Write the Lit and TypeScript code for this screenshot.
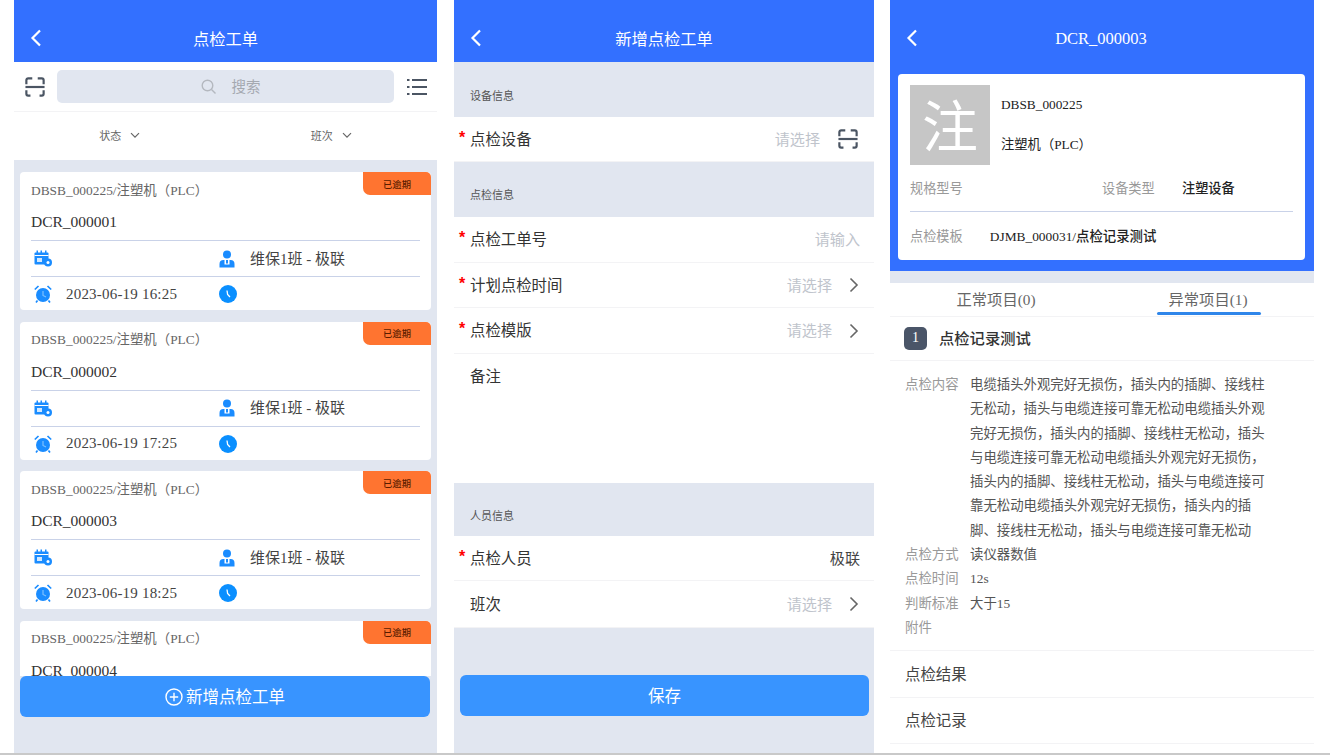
import { LitElement, html, css, svg } from 'lit'
import { customElement } from 'lit/decorators.js'

const back = html`<svg class="back" width="12" height="18" viewBox="0 0 12 18"><path d="M10 1.500 2.500 9l7.500 7.500" fill="none" stroke="#fff" stroke-width="2.200"/></svg>`

const scan = html`<svg width="20" height="20" viewBox="0 0 22 22" fill="none" stroke="#4b5563" stroke-width="2.400"><path d="M1.500 8V3.500a2 2 0 0 1 2-2H8M14 1.500h4.500a2 2 0 0 1 2 2V8M1.500 14.500v4a2 2 0 0 0 2 2H6M16 20.500h2.500a2 2 0 0 0 2-2v-4"/><path d="M0.500 11h21"/></svg>`

const chevronRight = html`<svg class="go" width="10" height="16" viewBox="0 0 10 16"><path d="M1.500 1.500 8 8l-6.500 6.500" fill="none" stroke="#666" stroke-width="1.600"/></svg>`

const chevronDown = html`<svg width="10" height="7" viewBox="0 0 10 7"><path d="M1 1.200 5 5.200l4-4" fill="none" stroke="#666" stroke-width="1.200"/></svg>`

const calendar = html`<svg width="18" height="17" viewBox="0 0 18 17"><g fill="#1a8cff"><rect x="0.500" y="2.500" width="14" height="12" rx="1"/><rect x="2.500" y="0.500" width="1.500" height="3.500"/><rect x="6.500" y="0.500" width="1.500" height="3.500"/><rect x="11" y="0.500" width="1.500" height="3.500"/><circle cx="14" cy="12.500" r="4"/></g><rect x="0.500" y="5" width="14" height="1" fill="#fff"/><rect x="3" y="8" width="5" height="4" fill="#fff" opacity=".8"/><circle cx="14" cy="12.500" r="1.500" fill="#fff"/></svg>`

const user = html`<svg width="16" height="18" viewBox="0 0 16 18" fill="#1a8cff"><circle cx="8" cy="4.500" r="4"/><path d="M0.500 17.500v-3.500a4 4 0 0 1 4-4h1v4.500h5V10h1a4 4 0 0 1 4 4v3.500z"/><rect x="7" y="10" width="2" height="3.500"/></svg>`

const alarm = html`<svg width="18" height="18" viewBox="0 0 18 18"><circle cx="9" cy="10" r="7" fill="#1a8cff"/><path d="M9 6v4.500l3 1.500" fill="none" stroke="#7cc0ff" stroke-width="1.200"/><path d="M0.800 4.500 4.500 1M17.200 4.500 13.500 1M3.500 15.500 2 17.500M14.500 15.500l1.500 2" stroke="#1a8cff" stroke-width="1.700" fill="none"/></svg>`

const clock = html`<svg width="18" height="18" viewBox="0 0 18 18"><circle cx="9" cy="9" r="9" fill="#0a8fff"/><path d="M8 5.500 8.600 9.500l2.400 2.500" fill="none" stroke="#fff" stroke-width="1.300"/></svg>`

const magnifier = svg`<circle cx="6.500" cy="6.500" r="5.300" fill="none" stroke="#b4b8bf" stroke-width="1.400"/><path d="m10.500 10.500 4 4" stroke="#b4b8bf" stroke-width="1.400"/>`

const menuLines = svg`<g fill="#4b5563"><rect x="0" y="1" width="2.500" height="2"/><rect x="5" y="1" width="15" height="2"/><rect x="0" y="8" width="2.500" height="2"/><rect x="5" y="8" width="15" height="2"/><rect x="0" y="15" width="2.500" height="2"/><rect x="5" y="15" width="15" height="2"/></g>`

const orders = [
  { no: 'DCR_000001', time: '2023-06-19 16:25' },
  { no: 'DCR_000002', time: '2023-06-19 17:25' },
  { no: 'DCR_000003', time: '2023-06-19 18:25' },
  { no: 'DCR_000004', time: '2023-06-19 19:25' },
]

@customElement('app-root')
export class AppRoot extends LitElement {
  static styles = css`
    :host {
      display: block;
      height: 755px;
      overflow: hidden;
      background: #fff;
      font-family: 'Liberation Serif', 'Noto Sans CJK SC', serif;
      color: #333;
      position: relative;
    }
    .page {
      display: flex;
      height: 753px;
      padding-left: 14px;
      border-bottom: 2px solid #c9c9c9;
    }
    .panel {
      display: flex;
      flex-direction: column;
      background: #e1e6f0;
      overflow: hidden;
    }
    .p1 { width: 423px; margin-right: 17px; }
    .p2 { width: 420px; margin-right: 16px; }
    .p3 { width: 424px; background: #fff; }

    .nav {
      flex: none;
      height: 62px;
      background: #3370ff;
      color: #fff;
      display: flex;
      align-items: center;
      justify-content: center;
      font-size: 16.300px;
      padding-top: 14px;
      box-sizing: border-box;
      position: relative;
    }
    .back { position: absolute; left: 16px; top: 29px; }

    .tools {
      flex: none;
      height: 50px;
      background: #fff;
      border-bottom: 1px solid #f3f3f5;
      box-sizing: border-box;
      display: flex;
      align-items: center;
      padding: 0 10px 0 11px;
    }
    .search {
      width: 337px;
      height: 33px;
      margin: 0 13px 0 12px;
      padding: 0 0 3px 10px;
      box-sizing: border-box;
      background: #e1e6f0;
      border-radius: 5px;
      display: flex;
      align-items: center;
      justify-content: center;
      gap: 15px;
      color: #a5a9b0;
      font-size: 14.500px;
    }
    .search svg { margin-top: 3px; }
    .filters {
      flex: none;
      height: 48px;
      background: #fff;
      display: grid;
      grid-template-columns: 1fr 1fr;
      font-size: 11px;
      color: #666;
    }
    .filters div {
      display: flex;
      align-items: center;
      justify-content: center;
      gap: 9px;
      padding-bottom: 2px;
    }

    .list {
      flex: none;
      height: 516px;
      overflow: hidden;
      padding: 12px 6px 0;
      box-sizing: border-box;
      display: flex;
      flex-direction: column;
      gap: 11.500px;
    }
    .card {
      flex: none;
      height: 138px;
      background: #fff;
      border-radius: 4px;
      padding: 0 11px;
      position: relative;
      box-sizing: border-box;
    }
    .badge {
      position: absolute;
      top: 0;
      right: 0;
      width: 68px;
      height: 23px;
      background: #ff7430;
      border-radius: 0 5px 0 7px;
      font-size: 9.300px;
      font-weight: 500;
      color: #5a1d00;
      display: flex;
      align-items: center;
      justify-content: center;
    }
    .equip {
      height: 33px;
      display: flex;
      align-items: center;
      font-size: 13.400px;
      color: #666;
    }
    .no {
      height: 36px;
      padding-bottom: 1px;
      box-sizing: border-box;
      display: flex;
      align-items: center;
      font-size: 15.500px;
      border-bottom: 1px solid #c9d2e8;
    }
    .info {
      height: 35px;
      display: grid;
      grid-template-columns: 185px 1fr;
      align-items: center;
      font-size: 15px;
      color: #444;
    }
    .info + .info { border-top: 1px solid #c9d2e8; height: 34px; }
    .cell { display: flex; align-items: center; }
    .cell svg { flex: none; margin-left: 3px; }
    .team { margin-left: 15px; margin-top: -3px; }
    .date { margin-left: 14px; letter-spacing: 0.200px; }

    .fab {
      flex: none;
      height: 41px;
      padding-bottom: 2px;
      box-sizing: border-box;
      background: #3894ff;
      border-radius: 6px;
      color: #fff;
      font-size: 16.500px;
      display: flex;
      align-items: center;
      justify-content: center;
      gap: 3px;
    }
    .fab svg { margin-top: 2px; }
    .p1 .fab { margin: 0 7px 0 6px; }
    .p2 .fab { margin: 0 5px 0 6px; }

    .sect {
      flex: none;
      height: 55px;
      padding: 24px 0 0 16px;
      box-sizing: border-box;
      font-size: 11px;
      color: #555;
      line-height: 18px;
    }
    .sect.first { padding-top: 25px; }
    .sect.short { height: 53px; }
    .row {
      flex: none;
      height: 46px;
      background: #fff;
      border-bottom: 1px solid #f3f3f5;
      box-sizing: border-box;
      display: flex;
      align-items: center;
      padding: 0 14px 3px 16px;
      font-size: 15.400px;
      position: relative;
    }
    .row.low { height: 45px; }
    .row.tall { height: 47px; }
    .req::before {
      content: '*';
      position: absolute;
      left: 5px;
      top: 12px;
      color: #f00;
      font-size: 16px;
      font-weight: 700;
      font-family: 'Liberation Sans', sans-serif;
    }
    .val { margin-left: auto; color: #c0c4cc; font-size: 15.100px; }
    .val.set { color: #444; }
    .go { margin: 3px 1px 0 17px; }
    .row .scan { margin: 3px 2px 0 18px; display: flex; }
    .note { height: 129px; align-items: flex-start; padding-top: 10px; border: 0; }
    .foot { flex: none; height: 37px; }
    .gap47 { flex: none; height: 47px; }

    .hero {
      flex: none;
      background: #3370ff;
      height: 271px;
      padding: 0 9px 0 8px;
      box-sizing: border-box;
    }
    .hero .nav {
      height: 74px;
      padding: 4px 2px 0 0;
      margin: 0 -9px 0 -8px;
      background: none;
      font-size: 16.500px;
    }
    .sheet {
      height: 186px;
      background: #fff;
      border-radius: 4px;
      padding: 11px 12px 0;
      box-sizing: border-box;
    }
    .top { display: flex; height: 80px; }
    .thumb {
      width: 80px;
      height: 80px;
      overflow: hidden;
      background: #c6c6c6;
      color: #fff;
      font-size: 56px;
      line-height: 86px;
      text-align: center;
      flex: none;
    }
    .names {
      margin-left: 11px;
      padding-top: 10px;
      font-size: 13.300px;
      color: #222;
      line-height: 20px;
      display: flex;
      flex-direction: column;
      gap: 20px;
    }
    .spec {
      height: 47px;
      padding-bottom: 2px;
      display: grid;
      grid-template-columns: 192px 80px 1fr;
      align-items: center;
      font-size: 13.200px;
      color: #999;
      border-bottom: 1px solid #c9d2e8;
      box-sizing: border-box;
    }
    .strong { color: #222; font-weight: 500; }
    .tmpl {
      height: 48px;
      padding-bottom: 2px;
      box-sizing: border-box;
      display: flex;
      align-items: center;
      font-size: 13.200px;
      color: #999;
    }
    .tmpl b { margin-left: 27px; color: #222; font-weight: 500; font-size: 13.400px; }
    .strip { flex: none; height: 12px; background: #e1e6f0; }
    .tabs {
      flex: none;
      height: 34px;
      display: grid;
      grid-template-columns: 1fr 1fr;
      border-bottom: 1px solid #f3f3f5;
      box-sizing: border-box;
      font-size: 15.300px;
      color: #666;
      text-align: center;
      line-height: 33px;
    }
    .tab { position: relative; }
    .tab.on::after {
      content: '';
      position: absolute;
      left: 55px;
      bottom: 1px;
      width: 104px;
      height: 3px;
      border-radius: 2px;
      background: #2f86ea;
    }
    .head {
      flex: none;
      height: 44px;
      display: flex;
      align-items: center;
      padding: 0 0 1px 14px;
      gap: 12px;
      font-size: 15.300px;
      border-bottom: 1px solid #f3f3f5;
      box-sizing: border-box;
      font-weight: 500;
      color: #333;
    }
    .head-title { margin-top: -2px; }
    .num {
      width: 23px;
      height: 23px;
      background: #4a5568;
      color: #fff;
      border-radius: 5px;
      font-size: 14px;
      font-weight: 400;
      display: flex;
      align-items: center;
      justify-content: center;
    }
    .detail {
      flex: none;
      padding: 12px 0 0 15px;
      height: 290px;
      box-sizing: border-box;
      border-bottom: 1px solid #f3f3f5;
      font-size: 13.400px;
      line-height: 24.300px;
      color: #555;
    }
    .d {
      display: grid;
      grid-template-columns: 65px 298px;
    }
    .d span:first-child { color: #999; }
    .line {
      flex: none;
      height: 46.500px;
      padding: 0 0 2px 15px;
      border-bottom: 1px solid #f3f3f5;
      box-sizing: border-box;
      display: flex;
      align-items: center;
      font-size: 15.400px;
      color: #444;
    }
  `

  renderCard(o: { no: string; time: string }) {
    return html`
      <div class="card">
        <div class="badge">已逾期</div>
        <div class="equip">DBSB_000225/注塑机（PLC）</div>
        <div class="no">${o.no}</div>
        <div class="info">
          <div class="cell">${calendar}</div>
          <div class="cell">${user}<span class="team">维保1班 - 极联</span></div>
        </div>
        <div class="info">
          <div class="cell">${alarm}<span class="date">${o.time}</span></div>
          <div class="cell">${clock}</div>
        </div>
      </div>
    `
  }

  renderList() {
    return html`
      <section class="panel p1">
        <div class="nav">${back}点检工单</div>
        <div class="tools">
          ${scan}
          <div class="search">
            <svg width="16" height="16" viewBox="0 0 16 16">${magnifier}</svg>
            <span>搜索</span>
          </div>
          <svg width="20" height="18" viewBox="0 0 20 18">${menuLines}</svg>
        </div>
        <div class="filters">
          <div>状态 ${chevronDown}</div>
          <div>班次 ${chevronDown}</div>
        </div>
        <div class="list">${orders.map((o) => this.renderCard(o))}</div>
        <div class="fab">
          <svg width="18" height="18" viewBox="0 0 18 18" fill="none" stroke="#fff" stroke-width="1.400"><circle cx="9" cy="9" r="8"/><path d="M9 4.800v8.400M4.800 9h8.400"/></svg>
          新增点检工单
        </div>
      </section>
    `
  }

  renderForm() {
    return html`
      <section class="panel p2">
        <div class="nav">${back}新增点检工单</div>
        <div class="sect first">设备信息</div>
        <div class="row low req">点检设备<span class="val">请选择</span><span class="scan">${scan}</span></div>
        <div class="sect">点检信息</div>
        <div class="row req">点检工单号<span class="val">请输入</span></div>
        <div class="row low req">计划点检时间<span class="val">请选择</span>${chevronRight}</div>
        <div class="row req">点检模版<span class="val">请选择</span>${chevronRight}</div>
        <div class="row note">备注</div>
        <div class="sect short">人员信息</div>
        <div class="row low req">点检人员<span class="val set">极联</span></div>
        <div class="row tall">班次<span class="val">请选择</span>${chevronRight}</div>
        <div class="gap47"></div>
        <div class="fab">保存</div>
        <div class="foot"></div>
      </section>
    `
  }

  renderDetail() {
    return html`
      <section class="panel p3">
        <div class="hero">
          <div class="nav">${back}DCR_000003</div>
          <div class="sheet">
            <div class="top">
              <div class="thumb">注</div>
              <div class="names">
                <span>DBSB_000225</span>
                <span>注塑机（PLC）</span>
              </div>
            </div>
            <div class="spec">
              <span>规格型号</span><span>设备类型</span><span class="strong">注塑设备</span>
            </div>
            <div class="tmpl">点检模板<b>DJMB_000031/点检记录测试</b></div>
          </div>
        </div>
        <div class="strip"></div>
        <div class="tabs">
          <div class="tab">正常项目(0)</div>
          <div class="tab on">异常项目(1)</div>
        </div>
        <div class="head"><span class="num">1</span><span class="head-title">点检记录测试</span></div>
        <div class="detail">
          <div class="d">
            <span>点检内容</span>
            <span>电缆插头外观完好无损伤，插头内的插脚、接线柱无松动，插头与电缆连接可靠无松动电缆插头外观完好无损伤，插头内的插脚、接线柱无松动，插头与电缆连接可靠无松动电缆插头外观完好无损伤，插头内的插脚、接线柱无松动，插头与电缆连接可靠无松动电缆插头外观完好无损伤，插头内的插脚、接线柱无松动，插头与电缆连接可靠无松动</span>
          </div>
          <div class="d"><span>点检方式</span><span>读仪器数值</span></div>
          <div class="d"><span>点检时间</span><span>12s</span></div>
          <div class="d"><span>判断标准</span><span>大于15</span></div>
          <div class="d"><span>附件</span><span></span></div>
        </div>
        <div class="line">点检结果</div>
        <div class="line">点检记录</div>
      </section>
    `
  }

  render() {
    return html`<div class="page">${this.renderList()}${this.renderForm()}${this.renderDetail()}</div>`
  }
}
